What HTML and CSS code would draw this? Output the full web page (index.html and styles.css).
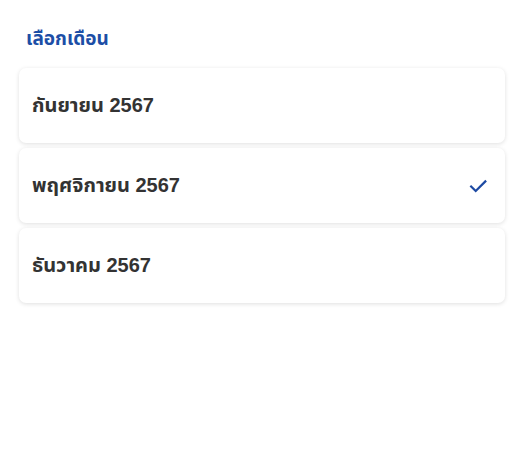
FILE: index.html
```html
<!DOCTYPE html>
<html lang="th">
<head>
<meta charset="utf-8">
<link rel="stylesheet" href="styles.css">
</head>
<body>
<div class="page">
  <h1 class="title">เลือกเดือน</h1>
  <div class="list">
    <div class="card"><span class="label">กันยายน 2567</span></div>
    <div class="card selected"><span class="label">พฤศจิกายน 2567</span>
      <svg class="check" width="22" height="22" viewBox="0 0 24 24"><path d="M4.5 12.5l5 5L20 7" fill="none" stroke="#1d4aa3" stroke-width="2.4" stroke-linecap="square"/></svg>
    </div>
    <div class="card"><span class="label">ธันวาคม 2567</span></div>
  </div>
</div>
</body>
</html>
```
FILE: styles.css
```css
* { box-sizing: border-box; }
html, body { margin: 0; padding: 0; background: #fff; }
body { font-family: "Liberation Sans", "Noto Sans Thai", "Noto Sans", sans-serif; }
.page { padding: 26px 18px 40px 19px; }
.title {
  margin: 0 0 16px 7px;
  font-size: 19px;
  font-weight: 700;
  line-height: 26px;
  color: #1c4ea6;
}
.list { display: flex; flex-direction: column; gap: 5px; }
.card {
  height: 75px;
  background: #fff;
  border-radius: 7px;
  box-shadow: 0 1px 4px rgba(0,0,0,0.13);
  display: flex;
  align-items: center;
  justify-content: space-between;
  padding: 0 16px 0 13px;
}
.label {
  font-size: 20px;
  font-weight: 700;
  color: #333;
}
.check { display: block; }
```
